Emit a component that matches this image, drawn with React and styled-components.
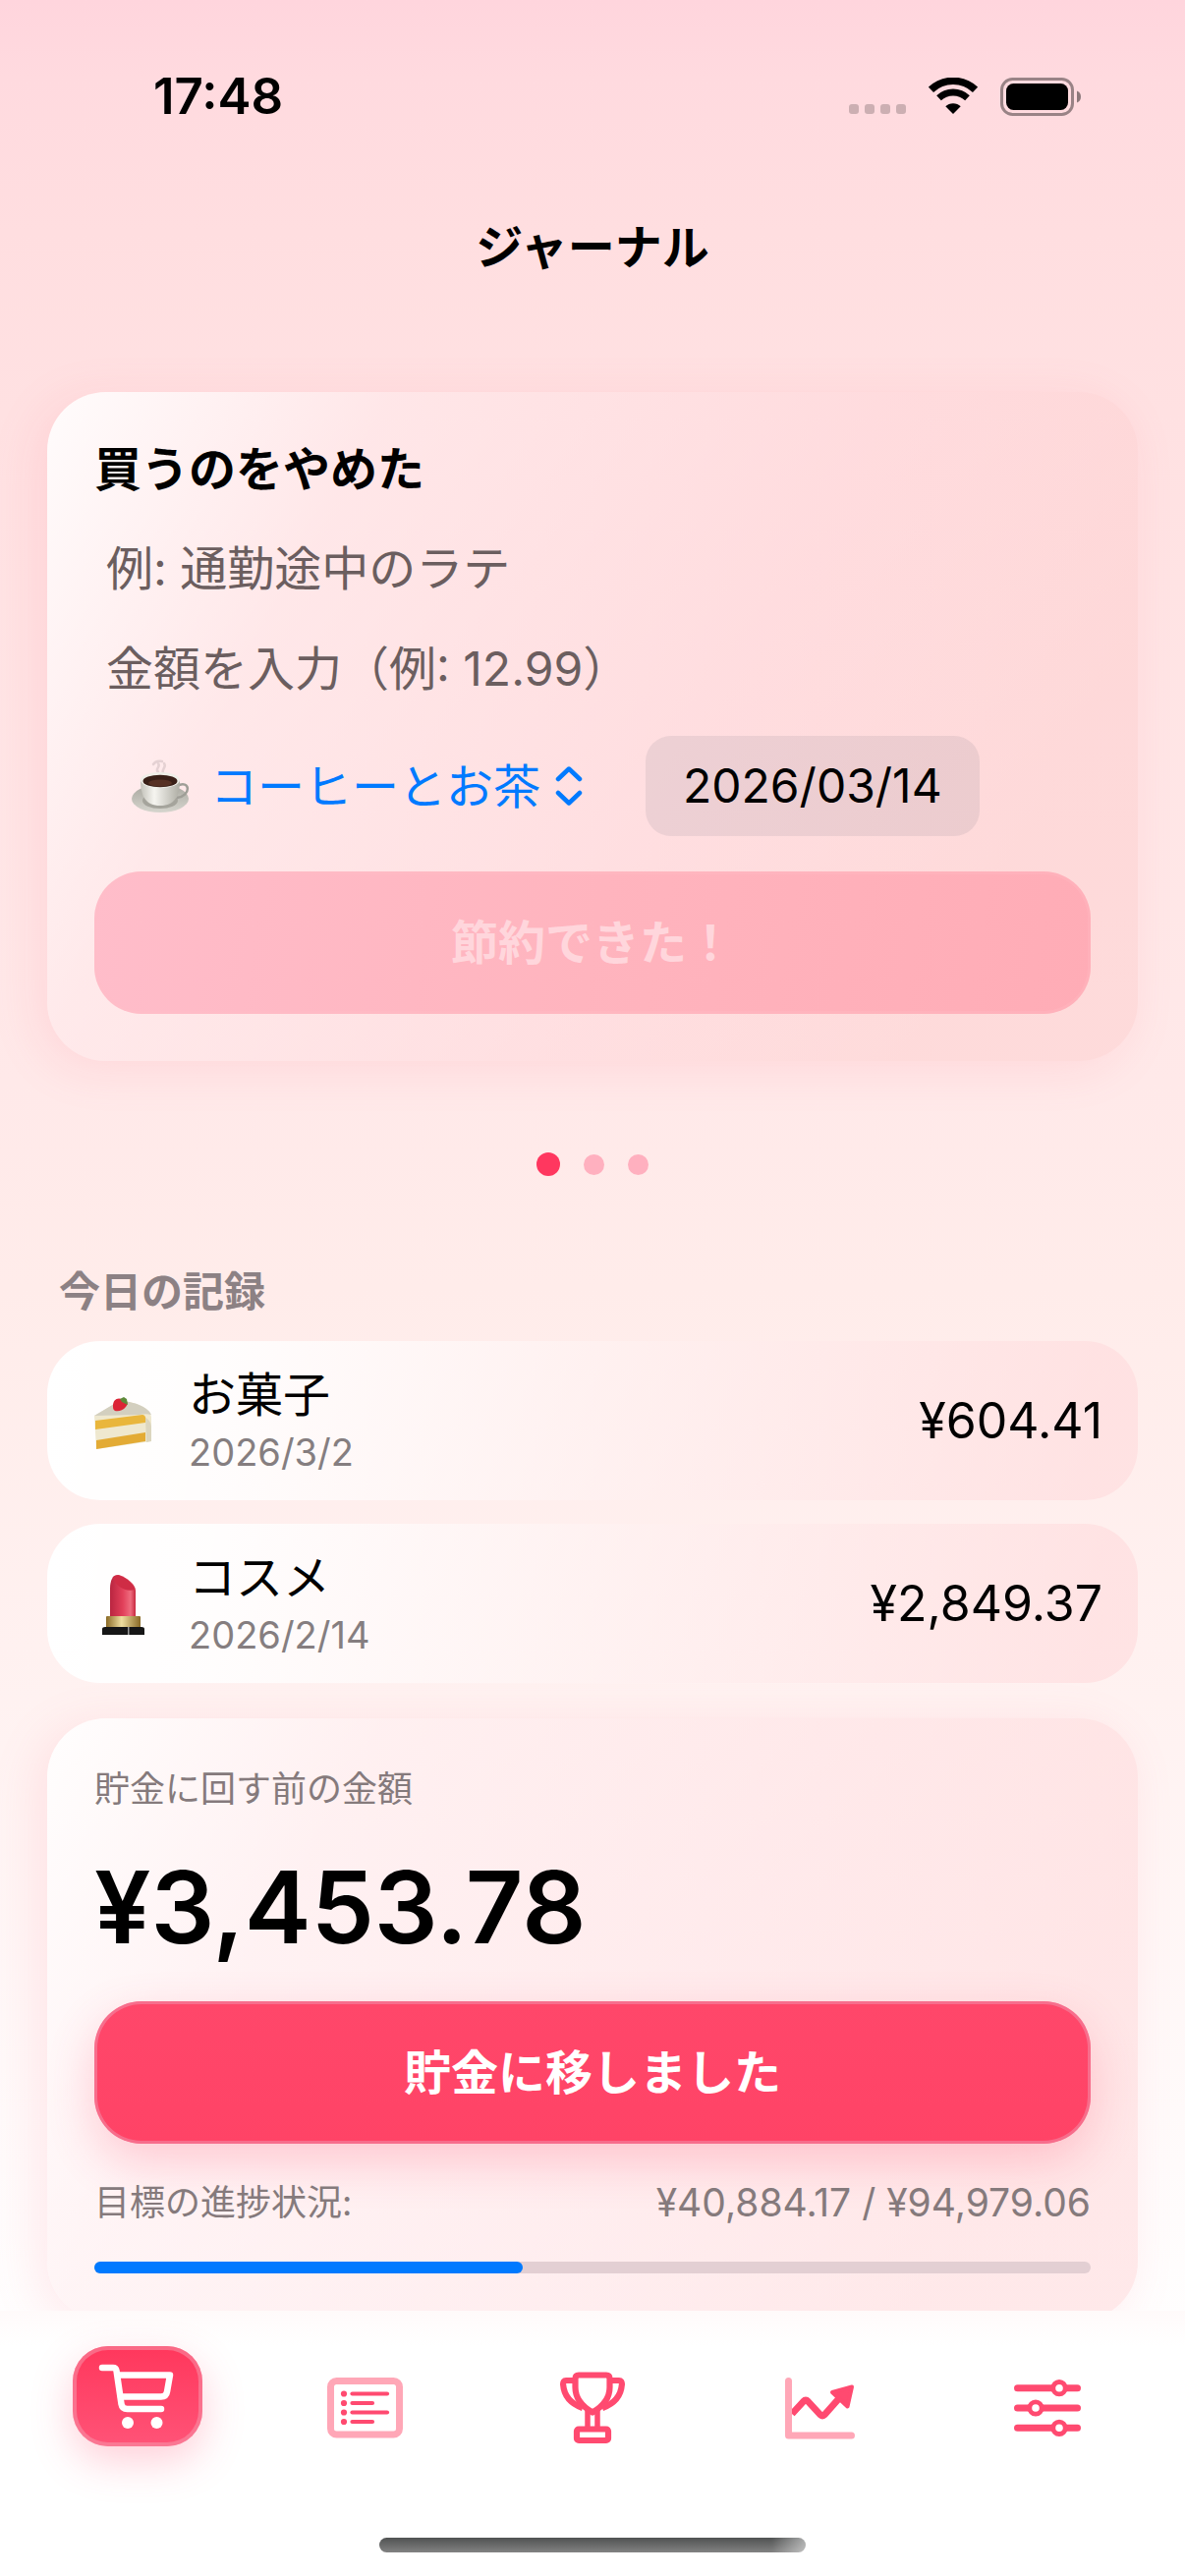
import React, { useState } from "react";
import styled, { createGlobalStyle, css } from "styled-components";

const Global = createGlobalStyle`
  * { box-sizing: border-box; }
  html, body, #root { height: 100%; }
  body { margin: 0; }
  body, button, input, select {
    font-family: Inter, "Noto Sans CJK JP", sans-serif;
    color: #000;
  }
  button, input, select { margin: 0; padding: 0; border: 0; background: none; outline: none; }
`;

const Screen = styled.div`
  height: 100vh;
  display: flex;
  flex-direction: column;
  overflow: hidden;
  background: linear-gradient(
    180deg,
    #ffd5dd 0,
    #ffdadf 3%,
    #ffdee0 9%,
    #ffe1e2 16%,
    #ffe9e9 42%,
    #ffecea 50%,
    #fff1f0 64%,
    #fffafa 82%,
    #ffffff 92%
  );
`;

const StatusBar = styled.div`
  flex: none;
  height: 196px;
  padding: 0 106px 0 156px;
  display: flex;
  align-items: center;
  justify-content: space-between;
`;

const Clock = styled.span`
  font-size: 51px;
  line-height: 60px;
  font-weight: 600;
`;

const StatusIcons = styled.div`
  display: flex;
  align-items: center;
  gap: 23px;
`;

const Header = styled.header`
  flex: none;
  height: 112px;
  display: flex;
  align-items: center;
  justify-content: center;
`;

const PageTitle = styled.h1`
  margin: 0;
  font-size: 48px;
  line-height: 60px;
  font-weight: 600;
`;

const Content = styled.main`
  flex: 1;
  min-height: 0;
  padding: 91px 48px 0;
  overflow-y: auto;
  scrollbar-width: none;
`;

const Card = styled.section`
  display: flex;
  flex-direction: column;
  gap: 36px;
  padding: 48px;
  border-radius: 60px;
  background: ${(p) =>
    p.$soft
      ? `linear-gradient(118deg, rgba(255, 255, 255, 0.9) 0%, rgba(255, 238, 240, 0.6) 24%,
          rgba(255, 222, 225, 0.5) 58%, rgba(255, 212, 214, 0.5) 84%)`
      : `linear-gradient(118deg, rgba(255, 255, 255, 0.9) 0%, rgba(255, 234, 236, 0.6) 24%,
          rgba(255, 214, 218, 0.5) 58%, rgba(253, 205, 205, 0.5) 84%)`};
  box-shadow: -10px 8px 48px rgba(255, 110, 135, 0.14);
`;

const CardTitle = styled.h2`
  margin: 0;
  font-size: 48px;
  line-height: 62px;
  font-weight: 700;
`;

const TextField = styled.input`
  width: 100%;
  height: 66px;
  padding: 0 12px;
  font-size: 48px;
  &::placeholder { color: #6b5e5f; opacity: 1; }
`;

const PickerRow = styled.div`
  display: flex;
  align-items: center;
  gap: 30px;
`;

const CategoryPicker = styled.label`
  display: flex;
  align-items: center;
  padding: 0 34px 0 38px;
`;

const CategorySelect = styled.select`
  appearance: none;
  margin: 0 14px 0 20px;
  height: 72px;
  font-size: 48px;
  color: #007aff;
`;

const DateButton = styled.button`
  height: 102px;
  padding: 0 38px;
  border-radius: 26px;
  background: rgba(118, 118, 135, 0.13);
  font-size: 48px;
  line-height: 60px;
`;

const WideButton = styled.button`
  width: 100%;
  height: 145px;
  border-radius: 48px;
  font-size: 48px;
  line-height: 60px;
  font-weight: 700;
  color: #fff;
  background: linear-gradient(180deg, #ff476a, #ff4366);
  box-shadow: inset 0 0 0 3px rgba(240, 150, 175, 0.5), 0 18px 48px rgba(255, 70, 105, 0.24);
  &:disabled {
    color: #ffd6dc;
    background: linear-gradient(100deg, #ffbdca, #ffb4be 50%, #ffacb6);
    box-shadow: inset 0 0 0 3px rgba(255, 190, 200, 0.25);
  }
`;

const Pager = styled.div`
  padding: 93px 0 92px;
`;

const PagerRow = styled.div`
  height: 24px;
  display: flex;
  align-items: center;
  justify-content: center;
  gap: 24px;
`;

const PagerDot = styled.button`
  width: ${(p) => (p.$active ? 24 : 21)}px;
  height: ${(p) => (p.$active ? 24 : 21)}px;
  border-radius: 50%;
  background: ${(p) => (p.$active ? "#ff375f" : "#ffb0bf")};
`;

const SectionTitle = styled.h3`
  margin: 0 12px 24px;
  font-size: 42px;
  line-height: 52px;
  font-weight: 600;
  color: #8c8184;
`;

const EntryList = styled.ul`
  list-style: none;
  margin: 0 0 36px;
  padding: 0;
  display: flex;
  flex-direction: column;
  gap: 24px;
`;

const Entry = styled.li`
  height: 162px;
  display: flex;
  align-items: center;
  gap: 36px;
  padding: 0 36px 0 48px;
  border-radius: 54px;
  background: linear-gradient(
    98deg,
    #fff 0%,
    rgba(255, 255, 255, 0.9) 15%,
    rgba(255, 243, 243, 0.6) 50%,
    rgba(255, 218, 220, 0.6) 96%
  );
`;

const EntryText = styled.div`
  flex: 1;
  display: flex;
  flex-direction: column;
`;

const EntryName = styled.span`
  font-size: 48px;
  line-height: 64px;
`;

const EntryDate = styled.span`
  font-size: 38px;
  line-height: 52px;
  color: #857e80;
`;

const EntryAmount = styled.span`
  font-size: 50px;
  line-height: 60px;
`;

const Caption = styled.span`
  font-size: 36px;
  line-height: 48px;
  color: #857a7c;
`;

const CaptionNumber = styled(Caption)`
  font-size: 39px;
`;

const Total = styled.span`
  font-size: 102px;
  line-height: 120px;
  font-weight: 600;
`;

const Split = styled.div`
  display: flex;
  justify-content: space-between;
`;

const Progress = styled.progress`
  appearance: none;
  display: block;
  width: 100%;
  height: 12px;
  border: 0;
  &::-webkit-progress-bar { background: #e3cfd3; border-radius: 6px; }
  &::-webkit-progress-value { background: #007aff; border-radius: 6px; }
`;

const TabBar = styled.nav`
  flex: none;
  height: 270px;
  padding: 36px 0 24px;
  display: flex;
  flex-direction: column;
  justify-content: space-between;
  align-items: center;
  background: linear-gradient(180deg, #fffafa 0, #ffffff 36px);
`;

const Tabs = styled.div`
  width: 100%;
  padding: 0 24px;
  display: grid;
  grid-template-columns: repeat(5, 1fr);
  justify-items: center;
`;

const activeTab = css`
  padding-top: 0;
  background: linear-gradient(180deg, #ff375c, #ff5377);
  box-shadow: inset 0 0 0 4px rgba(245, 155, 175, 0.5), 0 15px 42px rgba(255, 70, 105, 0.26);
`;

const Tab = styled.button`
  width: 132px;
  height: 102px;
  padding-top: 24px;
  display: flex;
  align-items: center;
  justify-content: center;
  border-radius: 36px;
  ${(p) => p.$active && activeTab}
`;

const HomeIndicator = styled.div`
  width: 36%;
  height: 15px;
  border-radius: 8px;
  background: linear-gradient(90deg, rgba(255, 255, 255, 0) 92%, rgba(255, 255, 255, 0.5)),
    linear-gradient(180deg, #505252, #828282);
`;

const SignalIcon = () => (
  <svg width="58" height="38" viewBox="0 0 58 38" fill="#000" fillOpacity="0.2">
    {[0, 16, 32, 48].map((x) => (
      <rect key={x} x={x} y="27" width="10" height="10" rx="3" />
    ))}
  </svg>
);

const WifiIcon = () => (
  <svg width="50" height="38" viewBox="0 0 50 38" fill="none" stroke="#000">
    <path d="M2.500 12.300A32.700 32.700 0 0 1 47.500 12.300" strokeWidth="7.400" />
    <path d="M10.500 20.800A21 21 0 0 1 39.500 20.800" strokeWidth="6.800" />
    <path d="M25 37L17.300 29.300A11 11 0 0 1 32.700 29.300Z" fill="#000" stroke="none" />
  </svg>
);

const BatteryIcon = () => (
  <svg width="82" height="39" viewBox="0 0 82 39">
    <rect x="1.5" y="1.5" width="72" height="36" rx="11" fill="none" stroke="#000" strokeOpacity="0.4" strokeWidth="3" />
    <rect x="6" y="6" width="63" height="27" rx="7.5" />
    <path d="M78 13.500c2.700 1 4 3.300 4 6s-1.300 5-4 6z" fillOpacity="0.45" />
  </svg>
);

const CoffeeIcon = () => (
  <svg width="60" height="56" viewBox="0 0 60 56">
    <defs>
      <linearGradient id="cup" x1="0" x2="1">
        <stop offset="0" stopColor="#c3c2ba" />
        <stop offset="0.35" stopColor="#f6f5f0" />
        <stop offset="1" stopColor="#aeada4" />
      </linearGradient>
      <linearGradient id="saucer" x1="0" x2="0" y1="0" y2="1">
        <stop offset="0" stopColor="#a9a8a0" />
        <stop offset="1" stopColor="#d6d5ce" />
      </linearGradient>
    </defs>
    <path d="M27 14c-4-4 3-5 0-9M32 15c-2-4 4-6 1-10M22 6c3-5 7-3 9-3" stroke="#a9979a" strokeOpacity="0.3" strokeWidth="2.500" fill="none" strokeLinecap="round" />
    <ellipse cx="29" cy="41" rx="29" ry="14" fill="url(#saucer)" />
    <ellipse cx="29" cy="43" rx="18" ry="8" fill="#a5a49c" />
    <path d="M46 28c14-7 15 10 0 12" fill="none" stroke="#9f9e97" strokeWidth="2.500" />
    <path d="M9 22c0 16 5 26 20 26s20-10 20-26z" fill="url(#cup)" />
    <ellipse cx="29" cy="22" rx="20" ry="8" fill="#efeee8" />
    <ellipse cx="29" cy="23" rx="17.500" ry="6.200" fill="#3a2018" />
    <ellipse cx="29" cy="25" rx="12" ry="3.500" fill="#573124" />
  </svg>
);

const CakeIcon = () => (
  <svg width="60" height="62" viewBox="0 -6 60 62">
    <path d="M0 20L26 5c14 0 32 7 32 17v24L2 54z" fill="#efe8cf" />
    <path d="M0 20L25 5c14 0 30 6 33 14-4-1-8-1-12 0z" fill="#d3cfbf" />
    <path d="M1 25l48-6c3 0 4 4 3 8L1 34z" fill="#e9b63c" />
    <path d="M2 45l50-8v9L2 54z" fill="#e3ab35" />
    <path d="M52 22c4 2 6 6 6 10v14l-5 1z" fill="#dcd6bf" />
    <path d="M19 10c0-6 4-9 9-7 6 1 7 5 4 8-3 4-8 5-11 4-2-1-2-3-2-5z" fill="#dc2436" />
    <path d="M26 3l4-2 3 2 1 6-4-2-2-1z" fill="#5d8a3a" />
  </svg>
);

const LipstickIcon = () => (
  <svg width="60" height="64" viewBox="0 -2 60 64">
    <defs>
      <linearGradient id="stick" x1="0" x2="1">
        <stop offset="0" stopColor="#b92540" />
        <stop offset="0.5" stopColor="#e2405a" />
        <stop offset="0.8" stopColor="#ee6c7e" />
        <stop offset="1" stopColor="#c8283f" />
      </linearGradient>
      <linearGradient id="gold" x1="0" x2="1">
        <stop offset="0" stopColor="#8a6a26" />
        <stop offset="0.45" stopColor="#f0dfa0" />
        <stop offset="1" stopColor="#8a6a26" />
      </linearGradient>
    </defs>
    <path d="M16 46V15C16 6 19 0 25 1c9 3 17 10 17 16v29z" fill="url(#stick)" />
    <path d="M19 3c8-5 22 7 22 13-8 3-20-3-22-13z" fill="#cf2c45" />
    <rect x="12" y="43" width="35" height="13" rx="1" fill="url(#gold)" />
    <path d="M8 56q0-2 3-2h37q3 0 3 2v6H8z" fill="#161616" />
    <path d="M34 54h1.500v8H34z" fill="#9a9a9a" />
  </svg>
);

const ChevronsIcon = () => (
  <svg width="28" height="42" viewBox="0 0 28 42" fill="none" stroke="#007aff" strokeWidth="4.500" strokeLinecap="round" strokeLinejoin="round">
    <path d="M3 14L14 3.500L25 14M3 28L14 38.500L25 28" />
  </svg>
);

const CartIcon = () => (
  <svg width="84" height="72" viewBox="0 0 84 72" fill="none" stroke="#fff" strokeWidth="6.500" strokeLinecap="round" strokeLinejoin="round">
    <path d="M6 7h11q3 0 3.500 3l5 34q.8 5 6 5h34.500" />
    <path d="M22 14.500h53l-3 17q-.8 5-6 5H25" />
    <circle cx="32" cy="63" r="6" fill="#fff" stroke="none" />
    <circle cx="61.500" cy="63" r="6" fill="#fff" stroke="none" />
  </svg>
);

const ListIcon = () => (
  <svg width="77" height="62" viewBox="0 0 77 62" fill="none">
    <rect x="3.500" y="3.500" width="70" height="54.500" rx="6" stroke="#ffa7b7" strokeWidth="7" />
    {[16.5, 26, 35.5, 45].map((y, i) => (
      <g key={y}>
        <circle cx="17" cy={y} r="3.100" fill="#ff4a70" />
        <path d={`M25.500 ${y}H${i % 2 ? 46 : 61}`} stroke="#ff4a70" strokeWidth="4.200" strokeLinecap="round" />
      </g>
    ))}
  </svg>
);

const TrophyIcon = () => (
  <svg width="66" height="74" viewBox="0 0 66 74" fill="none" stroke="#ff4a70" strokeWidth="6.200" strokeLinejoin="round">
    <path d="M15.500 7q0-3.500 3.500-3.500h28q3.500 0 3.500 3.500v9c0 12-8 20-17.500 25.500C23.500 36 15.500 28 15.500 16z" />
    <path d="M15 9H6q-3 0-2.900 4c.9 12 8.900 20 19.900 24M51 9h9q3 0 2.900 4c-.9 12-8.900 20-19.900 24" />
    <path d="M28 39v18M38 39v18" strokeWidth="5.500" />
    <rect x="17" y="58.500" width="32" height="11.500" rx="2" />
  </svg>
);

const ChartIcon = () => (
  <svg width="71" height="63" viewBox="0 0 71 63" fill="none" strokeLinecap="round" strokeLinejoin="round">
    <path d="M7 37L18.500 24.500q2.500-2.500 5 0L35.500 37.500q2.500 2.500 5 0L56 20" stroke="#ff4a70" strokeWidth="7" strokeLinecap="butt" />
    <path d="M68 9.500L48 15L63.500 29.500Z" fill="#ff4a70" stroke="#ff4a70" strokeWidth="4" />
    <path d="M3.500 3.500V59H67.500" stroke="#ffa7b7" strokeWidth="7" />
  </svg>
);

const SlidersIcon = () => (
  <svg width="68" height="58" viewBox="0 0 68 58" stroke="#ff4a70" strokeLinecap="round">
    {[
      [8.7, 46],
      [29, 22],
      [49.3, 46],
    ].map(([y, x]) => (
      <g key={y}>
        <path d={`M3.500 ${y}H64.500`} strokeWidth="7" />
        <circle cx={x} cy={y} r="6.200" fill="#fff" strokeWidth="4.800" />
      </g>
    ))}
  </svg>
);

const entries = [
  { name: "お菓子", date: "2026/3/2", amount: "¥604.41", Icon: CakeIcon },
  { name: "コスメ", date: "2026/2/14", amount: "¥2,849.37", Icon: LipstickIcon },
];

const tabs = [
  { label: "ジャーナル", Icon: CartIcon },
  { label: "リスト", Icon: ListIcon },
  { label: "目標", Icon: TrophyIcon },
  { label: "統計", Icon: ChartIcon },
  { label: "設定", Icon: SlidersIcon },
];

export default function App() {
  const [item, setItem] = useState("");
  const [price, setPrice] = useState("");
  const [page, setPage] = useState(0);
  const [tab, setTab] = useState(0);

  return (
    <Screen>
      <Global />
      <StatusBar>
        <Clock>17:48</Clock>
        <StatusIcons>
          <SignalIcon />
          <WifiIcon />
          <BatteryIcon />
        </StatusIcons>
      </StatusBar>
      <Header>
        <PageTitle>ジャーナル</PageTitle>
      </Header>
      <Content>
        <Card>
          <CardTitle>買うのをやめた</CardTitle>
          <TextField
            aria-label="品目"
            placeholder="例: 通勤途中のラテ"
            value={item}
            onChange={(e) => setItem(e.target.value)}
          />
          <TextField
            aria-label="金額"
            placeholder="金額を入力（例: 12.99）"
            value={price}
            onChange={(e) => setPrice(e.target.value)}
          />
          <PickerRow>
            <CategoryPicker>
              <CoffeeIcon />
              <CategorySelect aria-label="カテゴリー" defaultValue="coffee">
                <option value="coffee">コーヒーとお茶</option>
                <option value="sweets">お菓子</option>
                <option value="cosmetics">コスメ</option>
              </CategorySelect>
              <ChevronsIcon />
            </CategoryPicker>
            <DateButton type="button">2026/03/14</DateButton>
          </PickerRow>
          <WideButton type="button" disabled={!item || !price}>
            節約できた！
          </WideButton>
        </Card>

        <Pager>
          <PagerRow>
            {[0, 1, 2].map((i) => (
              <PagerDot
                key={i}
                type="button"
                aria-label={`${i + 1}`}
                $active={i === page}
                onClick={() => setPage(i)}
              />
            ))}
          </PagerRow>
        </Pager>

        <SectionTitle>今日の記録</SectionTitle>
        <EntryList>
          {entries.map(({ name, date, amount, Icon }) => (
            <Entry key={name}>
              <Icon />
              <EntryText>
                <EntryName>{name}</EntryName>
                <EntryDate>{date}</EntryDate>
              </EntryText>
              <EntryAmount>{amount}</EntryAmount>
            </Entry>
          ))}
        </EntryList>

        <Card $soft>
          <Caption>貯金に回す前の金額</Caption>
          <Total>¥3,453.78</Total>
          <WideButton type="button">貯金に移しました</WideButton>
          <Split>
            <Caption as="label" htmlFor="goal">目標の進捗状況:</Caption>
            <CaptionNumber>¥40,884.17 / ¥94,979.06</CaptionNumber>
          </Split>
          <Progress id="goal" value={40884.17} max={94979.06} />
        </Card>
      </Content>
      <TabBar>
        <Tabs>
          {tabs.map(({ label, Icon }, i) => (
            <Tab key={label} type="button" aria-label={label} $active={i === tab} onClick={() => setTab(i)}>
              <Icon />
            </Tab>
          ))}
        </Tabs>
        <HomeIndicator />
      </TabBar>
    </Screen>
  );
}
